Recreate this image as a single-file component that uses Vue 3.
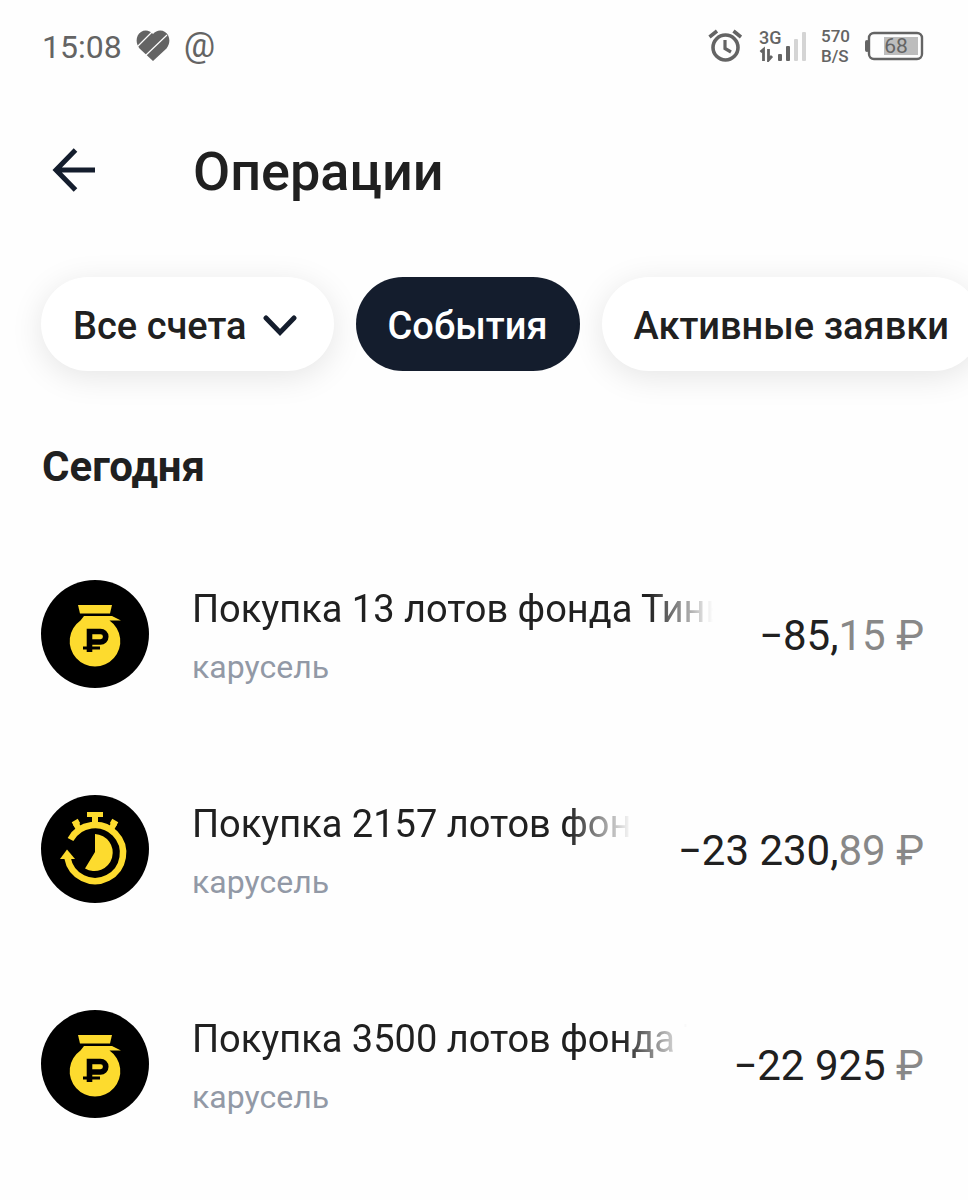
<script setup>
import { ref } from 'vue'

const activeTab = ref('events')

const operations = [
  { id: 1, icon: 'bag', title: 'Покупка 13 лотов фонда Тинькофф', account: 'карусель', whole: '−85,', cents: '15' },
  { id: 2, icon: 'timer', title: 'Покупка 2157 лотов фонда Тинькофф', account: 'карусель', whole: '−23 230,', cents: '89' },
  { id: 3, icon: 'bag', title: 'Покупка 3500 лотов фонда Тинькофф', account: 'карусель', whole: '−22 925', cents: '' },
]
</script>

<template>
  <div class="screen">
    <!-- System status bar -->
    <div class="status-bar">
      <div class="status-left">
        <span class="clock">15:08</span>
        <svg class="heart" viewBox="0 0 34 32" aria-hidden="true">
          <path d="M17 31 3.500 18.500C-1 13 0 5 5 2c4-2.500 9-1.500 12 2 3-3.500 8-4.500 12-2 5 3 6 11 1.500 16.500Z" fill="#646464" />
          <path d="M1 17 17 1M9 26 31 5" stroke="#fefefe" stroke-width="1.200" />
        </svg>
        <span class="at">@</span>
      </div>
      <div class="status-right">
        <svg class="alarm" viewBox="0 0 34 34" fill="none" stroke="#646464" aria-hidden="true">
          <circle cx="17.500" cy="18.500" r="12.500" stroke-width="3.600" />
          <path d="M17 11v8.500l6 3.500" stroke-width="3.200" />
          <path d="M1.500 8 9 2M33 8 25.500 2" stroke-width="3.600" />
        </svg>
        <div class="network">
          <span class="network-type">3G</span>
          <svg class="signal" viewBox="0 0 48 32" aria-hidden="true">
            <path d="M1.500 22 4.500 19.500V31M9.500 19v11l3.500-4" fill="none" stroke="#646464" stroke-width="2.800" />
            <g fill="#646464">
              <rect x="19" y="24" width="4" height="7" rx="1" />
              <rect x="27" y="16" width="4" height="15" rx="1" />
            </g>
            <g fill="#d4d4d4">
              <rect x="35" y="9" width="4" height="22" rx="1" />
              <rect x="43" y="2" width="4" height="29" rx="1" />
            </g>
          </svg>
        </div>
        <div class="speed">
          <span>570</span>
          <span>B/S</span>
        </div>
        <div class="battery">
          <svg viewBox="0 0 60 30" aria-hidden="true">
            <rect x="1" y="9" width="4" height="12" rx="2" fill="#646464" />
            <rect x="5" y="2" width="53" height="26" rx="5" fill="none" stroke="#646464" stroke-width="2.400" />
            <rect x="20" y="6" width="34" height="18" fill="#bdbdbd" />
          </svg>
          <span class="battery-level">68</span>
        </div>
      </div>
    </div>

    <header class="header">
      <button class="back" type="button" aria-label="Назад">
        <svg viewBox="0 0 44 44" fill="none" stroke="#141d2d" stroke-width="5" aria-hidden="true">
          <path d="M23.500 2 4 22l19.500 20M4 22h39" />
        </svg>
      </button>
      <h1>Операции</h1>
    </header>

    <nav class="filters">
      <button class="pill pill-select" type="button">
        Все счета
        <svg class="chevron" viewBox="0 0 34 22" fill="none" stroke="#141d2d" stroke-width="5" stroke-linecap="round" aria-hidden="true">
          <path d="M3 3 17 17.500 31 3" />
        </svg>
      </button>
      <button class="pill" :class="{ active: activeTab === 'events' }" type="button" @click="activeTab = 'events'">
        События
      </button>
      <button class="pill" :class="{ active: activeTab === 'orders' }" type="button" @click="activeTab = 'orders'">
        Активные заявки
      </button>
    </nav>

    <main>
      <h2>Сегодня</h2>
      <ul class="operations">
        <li v-for="item in operations" :key="item.id" class="operation">
          <!-- Money bag -->
          <svg v-if="item.icon === 'bag'" class="fund-icon" viewBox="0 0 108 108" aria-hidden="true">
            <circle cx="54" cy="54" r="54" fill="#000" />
            <g fill="#fddb2e">
              <path d="M37 25h34l-2 8.500H39Z" />
              <path d="M43 36h28l9 4.500H68.500a25.300 25.300 0 1 1-29 0Z" />
            </g>
            <path d="M48.500 72V51.500H59.500a5.200 5.200 0 0 1 0 10.500H48.500" fill="none" stroke="#000" stroke-width="5.600" />
            <path d="M42 68h17" stroke="#000" stroke-width="3" />
          </svg>
          <!-- Stopwatch -->
          <svg v-else class="fund-icon" viewBox="0 0 108 108" aria-hidden="true">
            <circle cx="54" cy="54" r="54" fill="#000" />
            <g fill="none" stroke="#fddb2e">
              <path d="M29.500 44.500A28 28 0 1 1 26.500 63" stroke-width="6.500" />
              <path d="M54 19v11M34.500 28l4 7M73.500 28l-4 7" stroke-width="6" />
              <path d="M46 19.500h16M32 29.500l6-3.500M70 26l6 3.500" stroke-width="5" />
            </g>
            <path d="M19 64 26 54.500l8 9.500Z" fill="#fddb2e" />
            <path d="M54 39a18.500 18.500 0 1 1-10 34.500L54 57Z" fill="#fddb2e" />
          </svg>
          <div class="details">
            <span class="title">{{ item.title }}</span>
            <span class="account">{{ item.account }}</span>
          </div>
          <div class="amount">{{ item.whole }}<span class="minor">{{ item.cents }} ₽</span></div>
        </li>
      </ul>
    </main>
  </div>
</template>

<style>
body {
  background: #fefefe;
}
</style>

<style scoped>
.screen {
  font-family: Roboto, 'Noto Sans', sans-serif;
  color: #202020;
  overflow: hidden;
}

.status-bar {
  display: flex;
  justify-content: space-between;
  align-items: center;
  height: 92px;
  padding: 0 44px 0 42px;
  color: #646464;
}

.status-left,
.status-right {
  display: flex;
  align-items: center;
}

.status-left {
  gap: 14px;
}

.clock {
  padding-top: 2px;
  font-size: 32px;
  line-height: 40px;
}

.heart {
  width: 34px;
  height: 32px;
}

.at {
  font-size: 35px;
  line-height: 36px;
}

.status-right {
  gap: 14px;
}

.alarm {
  width: 34px;
  height: 34px;
  margin-right: 3px;
}

.network {
  position: relative;
  width: 48px;
  height: 32px;
}

.network-type {
  position: absolute;
  top: -2px;
  left: 0;
  font-size: 18px;
  font-weight: 500;
  line-height: 20px;
}

.signal {
  display: block;
  width: 48px;
  height: 32px;
}

.speed {
  display: flex;
  flex-direction: column;
  font-size: 17px;
  font-weight: 500;
  line-height: 20px;
}

.battery {
  position: relative;
  width: 60px;
  height: 30px;
}

.battery svg {
  display: block;
  width: 60px;
  height: 30px;
}

.battery-level {
  position: absolute;
  inset: 0;
  padding-left: 4px;
  font-size: 21px;
  line-height: 30px;
  text-align: center;
}

.header {
  display: flex;
  align-items: center;
  gap: 97px;
  padding: 44px 44px 0 52px;
}

.back {
  display: flex;
  padding: 0 0 4px;
  border: 0;
  background: none;
  cursor: pointer;
}

.back svg {
  width: 44px;
  height: 44px;
}

h1 {
  margin: 0;
  font-size: 54px;
  font-weight: 500;
  line-height: 72px;
}

.filters {
  display: flex;
  gap: 22px;
  padding: 69px 0 0 41px;
}

.pill {
  display: flex;
  flex-shrink: 0;
  align-items: center;
  gap: 16px;
  height: 94px;
  padding: 4px 32px 0;
  border: 0;
  border-radius: 47px;
  background: #fff;
  box-shadow: 0 6px 32px rgba(0, 0, 0, 0.1);
  color: #202020;
  font-family: inherit;
  font-size: 38px;
  font-weight: 500;
  line-height: 48px;
  white-space: nowrap;
  cursor: pointer;
}

.pill-select {
  padding-right: 37px;
}

.pill.active {
  background: #141d2d;
  box-shadow: none;
  color: #fff;
}

.chevron {
  width: 34px;
  height: 22px;
}

h2 {
  margin: 0;
  padding: 68px 42px 0;
  font-size: 42px;
  font-weight: 700;
  line-height: 56px;
}

.operations {
  margin: 0;
  padding: 31px 44px 0 41px;
  list-style: none;
}

.operation {
  display: flex;
  align-items: center;
  height: 215px;
}

.fund-icon {
  flex-shrink: 0;
  width: 108px;
  height: 108px;
  margin-right: 43px;
}

.details {
  display: flex;
  flex: 1;
  flex-direction: column;
  gap: 12px;
  min-width: 0;
  padding-top: 6px;
}

/* Long titles dissolve before the amount */
.title {
  overflow: hidden;
  font-size: 38px;
  line-height: 48px;
  white-space: nowrap;
  mask-image: linear-gradient(to left, transparent, #000 64px);
}

.account {
  color: #9299a6;
  font-size: 32px;
  line-height: 44px;
}

.amount {
  flex-shrink: 0;
  margin-left: 46px;
  padding-top: 4px;
  font-size: 42px;
  line-height: 52px;
  white-space: nowrap;
}

.minor {
  color: #888;
}
</style>
